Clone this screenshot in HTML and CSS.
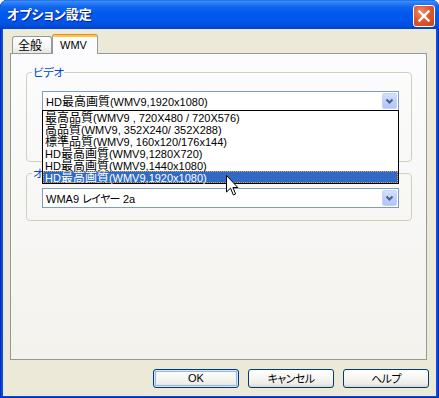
FILE: index.html
```html
<!DOCTYPE html>
<html lang="ja">
<head>
<meta charset="utf-8">
<title>オプション設定</title>
<link rel="stylesheet" href="styles.css">
</head>
<body>
<div class="window">
  <div class="titlebar">
    <span class="title">オプション設定</span>
    <span class="close"><svg width="20" height="20" viewBox="0 0 20 20"><path d="M5.5 5.5 L14.5 14.5 M14.5 5.5 L5.5 14.5" stroke="#fff" stroke-width="2.4" stroke-linecap="square"/></svg></span>
  </div>
  <div class="client">
    <div class="tabs">
      <div class="tab"><span class="j">全般</span></div>
      <div class="tab active">WMV</div>
    </div>
    <div class="panel">
      <fieldset class="group video">
        <legend>ビデオ</legend>
        <div class="combo">
          <span class="combo-text">HD<span class="j">最高画質</span>(WMV9,1920x1080)</span>
          <span class="combo-btn"><svg width="13" height="14" viewBox="0 0 13 14"><path d="M3.5 5.5 L6.5 8.5 L9.5 5.5" fill="none" stroke="#4D6185" stroke-width="2"/></svg></span>
          <ul class="dropdown">
            <li><span class="j">最高品質</span>(WMV9 , 720X480 / 720X576)</li>
            <li><span class="j">高品質</span>(WMV9, 352X240/ 352X288)</li>
            <li><span class="j">標準品質</span>(WMV9, 160x120/176x144)</li>
            <li>HD<span class="j">最高画質</span>(WMV9,1280X720)</li>
            <li>HD<span class="j">最高画質</span>(WMV9,1440x1080)</li>
            <li class="sel">HD<span class="j">最高画質</span>(WMV9,1920x1080)</li>
          </ul>
        </div>
      </fieldset>
      <fieldset class="group audio">
        <legend>オーディオ</legend>
        <div class="combo">
          <span class="combo-text">WMA9 <span class="k">レイヤー</span> 2a</span>
          <span class="combo-btn"><svg width="13" height="14" viewBox="0 0 13 14"><path d="M3.5 5.5 L6.5 8.5 L9.5 5.5" fill="none" stroke="#4D6185" stroke-width="2"/></svg></span>
        </div>
      </fieldset>
    </div>
    <div class="buttons">
      <button class="btn default">OK</button>
      <button class="btn"><span class="k">キャンセル</span></button>
      <button class="btn"><span class="k">ヘルプ</span></button>
    </div>
  </div>
  <svg class="cursor" width="13" height="22" viewBox="0 0 13 22"><path d="M0.5 0.5 L0.5 17 L4.5 13.2 L7.4 20 L9.6 19 L6.9 12.5 L11.8 12.5 Z" fill="#fff" stroke="#000" stroke-width="1" stroke-linejoin="miter"/></svg>
</div>
</body>
</html>
```
FILE: styles.css
```css
* { box-sizing: border-box; }
html, body { margin: 0; padding: 0; }
body {
  width: 439px;
  height: 398px;
  overflow: hidden;
  background: #ffffff;
  color: #000;
  font: 11px "Liberation Sans", "Noto Sans CJK JP", sans-serif;
}
.j {
  font-family: "Noto Sans CJK JP", sans-serif;
  font-size: 12px;
  font-feature-settings: "palt";
}
.k {
  font-family: "Noto Sans CJK JP", sans-serif;
  font-size: 11px;
  letter-spacing: -0.6px;
  font-feature-settings: "palt";
}
.window {
  position: relative;
  width: 439px;
  height: 398px;
  display: flex;
  flex-direction: column;
  background: #0A4ADF;
  border-radius: 7px 7px 0 0;
  overflow: hidden;
  box-shadow: inset 1px 0 #0030B0, inset -1px 0 #0030B0, inset 0 -1px #0030B0;
}
.titlebar {
  flex: none;
  height: 29px;
  display: flex;
  align-items: flex-start;
  justify-content: space-between;
  padding: 0 4px 0 7px;
  border-radius: 7px 7px 0 0;
  background: linear-gradient(#0A5AE0 0, #3D90FA 1px, #2C7FF6 3px, #1066EC 7px, #0059EE 13px, #0056EB 21px, #004DDD 26px, #0043C8 29px);
}
.title {
  margin-top: 6px;
  color: #fff;
  font: bold 13px/16px "Noto Sans CJK JP", sans-serif;
  font-feature-settings: "palt";
  text-shadow: 1px 1px 0 #0A1E8C;
}
.close {
  margin-top: 5px;
  width: 22px;
  height: 22px;
  border: 1px solid #fff;
  border-radius: 3px;
  background: radial-gradient(circle at 35% 30%, #F08B6A 0, #E2582E 45%, #C8401E 100%);
  display: flex;
  align-items: center;
  justify-content: center;
}
.close svg { display: block; }
.client {
  flex: 1;
  margin: 0 3px 2px;
  background: #ECE9D8;
  padding: 5px 7px 0;
  display: flex;
  flex-direction: column;
}
.tabs {
  flex: none;
  display: flex;
  align-items: flex-end;
  height: 20px;
  margin: 0 0 -1px 2px;
  position: relative;
  z-index: 1;
}
.tab {
  width: 40px;
  height: 17px;
  margin-bottom: 1px;
  border: 1px solid #919B9C;
  border-bottom: none;
  border-radius: 3px 3px 0 0;
  background: linear-gradient(#FFFFFF, #F6F6F3 60%, #E6E5DF);
  padding: 2px 0 0 5px;
  line-height: 12px;
}
.tab.active {
  width: 46px;
  height: 20px;
  margin-bottom: 0;
  border-top: none;
  padding: 5px 0 0 7px;
  background: linear-gradient(#E68B2C 0, #E68B2C 1px, #FFC73C 1px, #FFC73C 3px, #FCFCFE 3px);
}
.panel {
  flex: none;
  height: 307px;
  margin-right: 2px;
  border: 1px solid #919B9C;
  background: linear-gradient(#FCFCFE, #F3F2ED);
  padding: 11px 14px 0 15px;
}
.group {
  margin: 0;
  min-width: 0;
  border: 1px solid #D0D0BF;
  border-radius: 4px;
}
.video { padding: 12px 12px 50px 15px; }
.audio { margin-top: 4px; padding: 8px 12px 12px 15px; }
legend {
  margin-left: -10px;
  padding: 0 1px;
  color: #0046D5;
  font: 11.5px/14px "Noto Sans CJK JP", sans-serif;
  letter-spacing: -0.5px;
  font-feature-settings: "palt";
}
.combo {
  position: relative;
  height: 20px;
  border: 1px solid #7F9DB9;
  background: #fff;
  display: flex;
  align-items: center;
}
.combo-text {
  flex: 1;
  padding-left: 3px;
  line-height: 12px;
  white-space: nowrap;
}
.combo-btn {
  flex: none;
  width: 15px;
  height: 16px;
  margin-right: 1px;
  border: 1px solid #C3D3FD;
  border-radius: 2px;
  background: linear-gradient(#D5E0FD, #BFD0FA 50%, #B2C6F6);
  display: flex;
  align-items: center;
  justify-content: center;
}
.combo-btn svg { display: block; }
.dropdown {
  position: absolute;
  left: -1px;
  right: -1px;
  top: 18px;
  z-index: 10;
  margin: 0;
  padding: 0;
  list-style: none;
  background: #fff;
  border: 1px solid #000;
}
.dropdown li {
  height: 12px;
  line-height: 12px;
  padding-left: 2px;
  white-space: nowrap;
}
.dropdown li.sel {
  background: #316AC5;
  color: #fff;
  outline: 1px dotted #E7A443;
  outline-offset: -1px;
}
.buttons {
  flex: none;
  display: flex;
  justify-content: flex-end;
  gap: 9px;
  margin-top: 9px;
}
.btn {
  width: 86px;
  height: 19px;
  padding: 0;
  border: 1px solid #003C74;
  border-radius: 3px;
  background: linear-gradient(#FFFFFF, #F6F6F2 45%, #EEEDE7 80%, #D9D5CA);
  color: #000;
  font: 11px/17px "Liberation Sans", "Noto Sans CJK JP", sans-serif;
  text-align: center;
}
.btn.default {
  box-shadow: inset 0 0 0 1px #CEE7FF, inset 0 0 0 2px #98B8EA;
}
.cursor {
  position: absolute;
  left: 226px;
  top: 175px;
  z-index: 20;
}
```
